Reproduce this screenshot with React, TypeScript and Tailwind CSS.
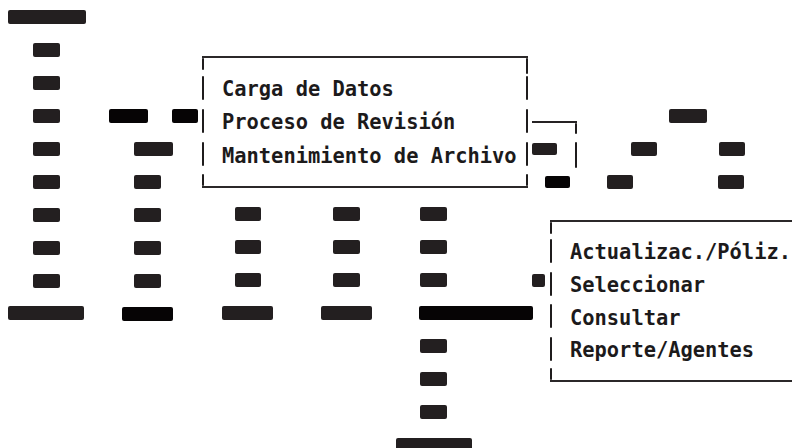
type BlockProps = { className?: string; dark?: boolean };

// one dash of the tree diagram
function Block({ className = "", dark }: BlockProps) {
  return (
    <div
      className={`h-[14px] rounded-[2px] ${dark ? "bg-[#060405]" : "bg-[#231f20]"} ${className}`}
    />
  );
}

function Stub({ className = "" }: { className?: string }) {
  return <div className={`w-[2px] bg-[#1f1c1d] rounded-[1px] ${className}`} />;
}

type MenuProps = {
  items: string[];
  className: string;
  rowHeight: string;
  closed?: boolean;
};

function Menu({ items, className, rowHeight, closed }: MenuProps) {
  return (
    <div
      className={`
        absolute
        flex
        flex-col
        border-y-2
        border-[#2b2829]
        ${className}
      `}
    >
      <div className="flex justify-between h-[13px]">
        <Stub className="h-[12px]" />
        {closed && <Stub className="h-[16px]" />}
      </div>

      {items.map((item) => (
        <div key={item} className={`flex items-center ${rowHeight}`}>
          <Stub className="h-[24px]" />
          <span
            className="
              ml-[18px]
              pt-[3px]
              font-['DejaVu_Sans_Mono',monospace]
              font-bold
              text-[20.4px]
              leading-none
              text-[#1c1a1b]
              whitespace-pre
            "
          >
            {item}
          </span>
          {closed && <Stub className="ml-auto h-[24px]" />}
        </div>
      ))}

      <div className="flex justify-between items-end h-[15px] grow">
        <Stub className="h-[12px]" />
        {closed && <Stub className="h-[12px]" />}
      </div>
    </div>
  );
}

export default function App() {
  return (
    <div className="relative w-[792px] h-[448px] overflow-hidden bg-white">
      {/* first column */}
      <div className="absolute left-[8px] top-[10px] flex flex-col gap-[19px]">
        <Block className="w-[78px]" />
        {[...Array(8)].map((_, index) => (
          <Block key={index} className="ml-[25px] w-[27px]" />
        ))}
        <Block className="w-[76px] -mt-[1px]" />
      </div>

      {/* second column */}
      <div className="absolute left-[109px] top-[109px] flex gap-[24px]">
        <Block dark className="w-[39px]" />
        <Block dark className="w-[26px]" />
      </div>
      <div className="absolute left-[122px] top-[142px] flex flex-col gap-[19px]">
        <Block className="ml-[12px] w-[39px]" />
        <Block className="ml-[12px] w-[27px]" />
        <Block className="ml-[12px] w-[27px]" />
        <Block className="ml-[12px] w-[27px]" />
        <Block className="ml-[12px] w-[27px]" />
        <Block dark className="w-[51px]" />
      </div>

      {/* third and fourth columns */}
      <div className="absolute left-[222px] top-[207px] flex flex-col gap-[19px]">
        <Block className="ml-[13px] w-[26px]" />
        <Block className="ml-[13px] w-[26px]" />
        <Block className="ml-[13px] w-[26px]" />
        <Block className="w-[51px]" />
      </div>
      <div className="absolute left-[321px] top-[207px] flex flex-col gap-[19px]">
        <Block className="ml-[12px] w-[27px]" />
        <Block className="ml-[12px] w-[27px]" />
        <Block className="ml-[12px] w-[27px]" />
        <Block className="w-[51px]" />
      </div>

      {/* fifth column */}
      <div className="absolute left-[396px] top-[207px] flex flex-col gap-[19px]">
        <Block className="ml-[24px] w-[27px]" />
        <Block className="ml-[24px] w-[27px]" />
        <Block className="ml-[24px] w-[27px]" />
        <Block dark className="ml-[23px] w-[114px]" />
        <Block className="ml-[24px] w-[27px]" />
        <Block className="ml-[24px] w-[27px]" />
        <Block className="ml-[24px] w-[27px]" />
        <Block className="w-[76px]" />
      </div>

      {/* right branch */}
      <div className="absolute left-[532px] top-[121px] w-[45px] flex flex-col items-end">
        <div className="w-full h-[2px] bg-[#262324]" />
        <Stub className="h-[11px]" />
        <Stub className="h-[26px] mt-[8px]" />
      </div>
      <Block className="absolute left-[532px] top-[143px] w-[25px] !h-[12px]" />
      <Block dark className="absolute left-[545px] top-[176px] w-[25px] !h-[12px]" />
      <Block className="absolute left-[607px] top-[175px] w-[26px]" />
      <Block className="absolute left-[631px] top-[142px] w-[26px]" />
      <Block className="absolute left-[669px] top-[109px] w-[38px]" />
      <Block className="absolute left-[719px] top-[142px] w-[26px]" />
      <Block className="absolute left-[718px] top-[175px] w-[26px]" />
      <Block className="absolute left-[532px] top-[274px] w-[13px] !h-[13px]" />

      <Menu
        className="left-[202px] top-[56px] w-[326px] h-[132px]"
        rowHeight="h-[33.5px]"
        items={["Carga de Datos", "Proceso de Revisión", "Mantenimiento de Archivo"]}
        closed
      />

      <Menu
        className="left-[550px] top-[220px] w-[300px] h-[162px]"
        rowHeight="h-[33px]"
        items={["Actualizac./Póliz.", "Seleccionar", "Consultar", "Reporte/Agentes"]}
      />
    </div>
  );
}
